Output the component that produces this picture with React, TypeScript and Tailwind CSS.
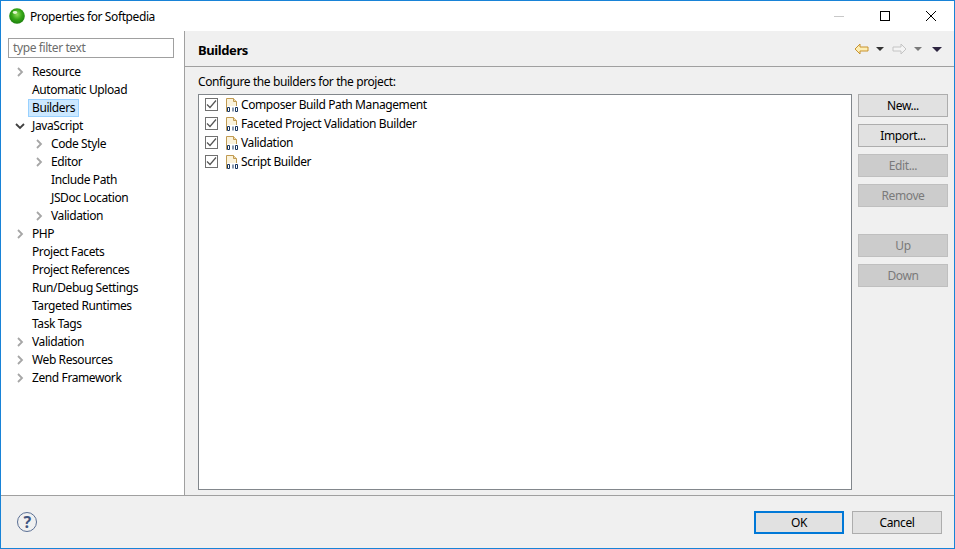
const tree: { label: string; depth: number; arrow?: "right" | "down"; selected?: boolean }[] = [
  { label: "Resource", depth: 0, arrow: "right" },
  { label: "Automatic Upload", depth: 0 },
  { label: "Builders", depth: 0, selected: true },
  { label: "JavaScript", depth: 0, arrow: "down" },
  { label: "Code Style", depth: 1, arrow: "right" },
  { label: "Editor", depth: 1, arrow: "right" },
  { label: "Include Path", depth: 1 },
  { label: "JSDoc Location", depth: 1 },
  { label: "Validation", depth: 1, arrow: "right" },
  { label: "PHP", depth: 0, arrow: "right" },
  { label: "Project Facets", depth: 0 },
  { label: "Project References", depth: 0 },
  { label: "Run/Debug Settings", depth: 0 },
  { label: "Targeted Runtimes", depth: 0 },
  { label: "Task Tags", depth: 0 },
  { label: "Validation", depth: 0, arrow: "right" },
  { label: "Web Resources", depth: 0, arrow: "right" },
  { label: "Zend Framework", depth: 0, arrow: "right" },
]

const builders = [
  "Composer Build Path Management",
  "Faceted Project Validation Builder",
  "Validation",
  "Script Builder",
]

function Arrow({ dir }: { dir: "right" | "down" }) {
  return (
    <svg width="10" height="10" viewBox="0 0 10 10" fill="none" stroke={dir === "down" ? "#404040" : "#a6a6a6"} strokeWidth="1.8">
      {dir === "right" ? <path d="M3 1l4 4-4 4" /> : <path d="M1 3l4 4 4-4" />}
    </svg>
  )
}

function BuilderIcon() {
  return (
    <svg width="16" height="16" viewBox="0 0 16 16" className="shrink-0">
      <path d="M1.5 1.5h7l3 3v10h-10z" fill="#fbf3dc" stroke="#c09a52" />
      <path d="M8.5 1.5v3h3" fill="#f0dca8" stroke="#c09a52" />
      <rect x="2" y="9" width="14" height="6" fill="#ffffff" />
      <path d="M2.5 10.5h2v4h-2zM8 10.5v4M10.5 10.5h2v4h-2z" fill="none" stroke="#17355f" strokeWidth="1" />
    </svg>
  )
}

function Check() {
  return (
    <div className="w-[13px] h-[13px] border border-[#707070] bg-white flex items-center justify-center shrink-0">
      <svg width="11" height="11" viewBox="0 0 11 11" fill="none" stroke="#555555" strokeWidth="1.2">
        <path d="M1 5.5l3 3 6-7" />
      </svg>
    </div>
  )
}

function SideButton({ label, disabled, className }: { label: string; disabled?: boolean; className?: string }) {
  return (
    <div
      className={
        "h-[23px] w-[90px] flex items-center justify-center border " +
        (disabled ? "bg-[#cccccc] border-[#bfbfbf] text-[#7a7a7a] " : "bg-[#e1e1e1] border-[#adadad] text-black ") +
        (className ?? "")
      }
    >
      {label}
    </div>
  )
}

export default function App() {
  return (
    <div className="w-[955px] h-[549px] flex flex-col border border-[#1883d7] bg-white text-[12px] leading-[18px] tracking-[-0.4px] text-black overflow-hidden font-['Noto_Sans',sans-serif]">
      {/* title bar */}
      <div className="h-[30px] flex items-center shrink-0">
        <svg width="16" height="16" viewBox="0 0 16 16" className="ml-[8px]">
          <defs>
            <radialGradient id="ball" cx="0.5" cy="0.4" r="0.65">
              <stop offset="0" stopColor="#8fdc5a" />
              <stop offset="0.5" stopColor="#35a516" />
              <stop offset="1" stopColor="#17780c" />
            </radialGradient>
          </defs>
          <circle cx="8" cy="8" r="7.8" fill="url(#ball)" />
          <ellipse cx="6" cy="4.5" rx="2.2" ry="1.4" fill="#e4f7d0" />
        </svg>
        <span className="ml-[5px] pt-px">Properties for Softpedia</span>
        <div className="ml-auto flex items-center">
          <div className="w-[46px] h-[30px] flex items-center justify-center">
            <div className="w-[10px] h-px bg-[#c8c8c8]" />
          </div>
          <div className="w-[46px] h-[30px] flex items-center justify-center">
            <div className="w-[10px] h-[10px] border border-black" />
          </div>
          <div className="w-[46px] h-[30px] flex items-center justify-center">
            <svg width="10" height="10" viewBox="0 0 10 10" stroke="#000000" strokeWidth="1">
              <path d="M0 0l10 10M10 0L0 10" />
            </svg>
          </div>
        </div>
      </div>

      <div className="flex-1 flex min-h-0">
        {/* left tree */}
        <div className="w-[184px] shrink-0 border-r border-[#a0a0a0] pt-[7px]">
          <div className="ml-[7px] w-[166px] h-[20px] border border-[#a0a0a0] px-[4px] flex items-center text-[#6d6d6d]">
            type filter text
          </div>
          <div className="mt-[5px] flex flex-col">
            {tree.map((n, i) => (
              <div key={i} className={"h-[18px] flex items-center " + (n.depth === 1 ? "pl-[31px]" : "pl-[12px]")}>
                <div className="w-[13px] flex justify-center shrink-0">{n.arrow && <Arrow dir={n.arrow} />}</div>
                <span
                  className={
                    "ml-[2px] px-[3px] h-[18px] flex items-center border whitespace-nowrap " +
                    (n.selected ? "bg-[#cce8ff] border-[#99d1ff]" : "border-transparent")
                  }
                >
                  {n.label}
                </span>
              </div>
            ))}
          </div>
        </div>

        {/* right panel */}
        <div className="flex-1 min-w-0 flex flex-col bg-[#f0f0f0]">
          <div className="h-[36px] shrink-0 border-b border-[#a0a0a0] flex items-center pl-[13px] pr-[12px]">
            <span className="font-bold text-[13px] pt-[2px]">Builders</span>
            <div className="ml-auto flex items-center pt-px">
              <svg width="15" height="12" viewBox="0 0 15 12">
                <path d="M1 6l5-5v3h8v4H6v3z" fill="#fdeeb5" stroke="#c8932f" />
              </svg>
              <svg width="8" height="4" viewBox="0 0 8 4" className="ml-[7px]">
                <path d="M0 0h8L4 4z" fill="#333333" />
              </svg>
              <svg width="15" height="12" viewBox="0 0 15 12" className="ml-[8px]">
                <path d="M14 6L9 1v3H1v4h8v3z" fill="#f4f4f4" stroke="#c4c4c4" />
              </svg>
              <svg width="8" height="4" viewBox="0 0 8 4" className="ml-[7px]">
                <path d="M0 0h8L4 4z" fill="#7a7a7a" />
              </svg>
              <svg width="10" height="5" viewBox="0 0 10 5" className="ml-[10px]">
                <path d="M0 0h10L5 5z" fill="#2d2540" />
              </svg>
            </div>
          </div>
          <div className="flex-1 min-h-0 flex flex-col pl-[13px] pr-[6px] pt-[6px] pb-[5px]">
            <div className="h-[18px] shrink-0">Configure the builders for the project:</div>
            <div className="flex-1 min-h-0 flex gap-[6px] mt-[3px]">
              <div className="w-[654px] border border-[#82878c] bg-white">
                {builders.map((b) => (
                  <div key={b} className="h-[19px] flex items-center pl-[6px] gap-[7px]">
                    <Check />
                    <div className="flex items-center">
                      <BuilderIcon />
                      <span className="whitespace-nowrap">{b}</span>
                    </div>
                  </div>
                ))}
              </div>
              <div className="flex flex-col">
                <SideButton label="New..." />
                <SideButton label="Import..." className="mt-[7px]" />
                <SideButton label="Edit..." disabled className="mt-[7px]" />
                <SideButton label="Remove" disabled className="mt-[7px]" />
                <SideButton label="Up" disabled className="mt-[27px]" />
                <SideButton label="Down" disabled className="mt-[7px]" />
              </div>
            </div>
          </div>
        </div>
      </div>

      {/* footer */}
      <div className="h-[53px] shrink-0 border-t border-[#a0a0a0] bg-[#f0f0f0] flex items-center pl-[16px] pr-[12px]">
        <div className="w-[20px] h-[20px] rounded-full border-[1.5px] border-[#5a6f94] flex items-center justify-center font-bold text-[16px] text-[#3f5580]">
          ?
        </div>
        <div className="ml-auto flex gap-[8px]">
          <div className="w-[90px] h-[23px] pt-px border-2 border-[#0078d7] bg-[#e1e1e1] flex items-center justify-center">OK</div>
          <div className="w-[90px] h-[23px] pt-px border border-[#adadad] bg-[#e1e1e1] flex items-center justify-center">Cancel</div>
        </div>
      </div>
    </div>
  )
}
